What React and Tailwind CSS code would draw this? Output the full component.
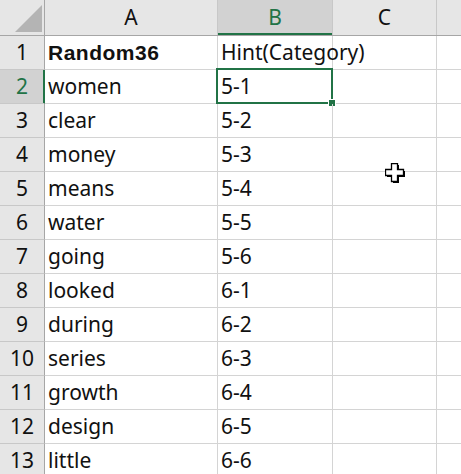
import React from 'react';

const ROWS = [
    ["Random36", "Hint(Category)"],
    ["women", "5-1"],
    ["clear", "5-2"],
    ["money", "5-3"],
    ["means", "5-4"],
    ["water", "5-5"],
    ["going", "5-6"],
    ["looked", "6-1"],
    ["during", "6-2"],
    ["series", "6-3"],
    ["growth", "6-4"],
    ["design", "6-5"],
    ["little", "6-6"],
];

const COLS = "grid-cols-[45px_173px_115px_104px_1fr]";

const CrossCursor = () => (
    <svg width="22" height="22" viewBox="0 0 22 22" className="absolute left-[385px] top-[163px]">
        <path d="M8 2h6v6h6v6h-6v6H8v-6H2V8h6z" fill="#000" />
        <path d="M6.5 0.5h6v6h6v6h-6v6h-6v-6h-6v-6h6z" fill="#fff" stroke="#000" strokeWidth="1.3" />
    </svg>
);

const App = () => {
    return (
        <div className="relative w-[461px] h-[474px] overflow-hidden bg-white text-[21px] text-[#111] font-['Noto_Sans',sans-serif]">
            {/* column headers */}
            <div className={`grid ${COLS} h-[36px] bg-[#e6e6e6] border-b border-[#a6a6a6]`}>
                <div className="relative border-r border-[#a6a6a6]">
                    <div className="absolute left-[15px] top-[5px] w-[27px] h-[27px] bg-[#b4b4b4] [clip-path:polygon(100%_0,100%_100%,0_100%)]" />
                </div>
                <div className="flex items-center justify-center border-r border-[#c8c8c8] pt-[1px]">A</div>
                <div className="flex items-center justify-center bg-[#d2d2d2] border-r border-[#c8c8c8] pt-[1px] text-[#217346] shadow-[inset_0_-2px_0_#217346]">B</div>
                <div className="flex items-center justify-center border-r border-[#c8c8c8] pt-[1px]">C</div>
                <div />
            </div>

            {ROWS.map(([a, b], i) => {
                const selected = i === 1;
                return (
                    <div key={i} className={`grid ${COLS} h-[34px]`}>
                        <div className={`flex items-center justify-center border-b border-r ${selected ? 'bg-[#d2d2d2] text-[#217346] border-r-[#217346] border-b-[#c8c8c8] shadow-[inset_-1px_0_0_#217346]' : 'bg-[#e6e6e6] border-[#c8c8c8] border-r-[#a6a6a6]'}`}>
                            {i + 1}
                        </div>
                        <div className={`flex items-center pl-[3px] border-b border-r border-[#d4d4d4] ${i === 0 ? "font-bold font-['Liberation_Sans',sans-serif] tracking-[0.5px]" : ''}`}>
                            {a}
                        </div>
                        <div className="relative flex items-center pl-[3px] border-b border-r border-[#d4d4d4]">
                            {b}
                            {selected && (
                                <>
                                    <div className="absolute left-[-2px] top-[-2px] right-[-1px] bottom-[-1px] border-2 border-[#217346]" />
                                    <div className="absolute right-[-4px] bottom-[-4px] w-[8px] h-[8px] bg-[#217346] border border-white" />
                                </>
                            )}
                        </div>
                        <div className="border-b border-r border-[#d4d4d4]" />
                        <div className="border-b border-[#d4d4d4]" />
                    </div>
                );
            })}

            <CrossCursor />
        </div>
    );
};

export default App;
